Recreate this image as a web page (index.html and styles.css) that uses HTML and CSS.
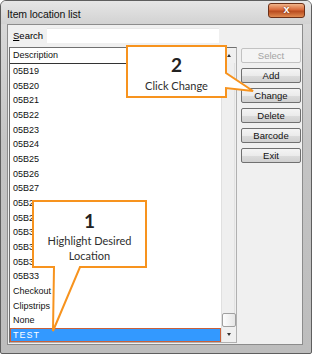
FILE: index.html
```html
<!DOCTYPE html>
<html lang="en">
<head>
  <meta charset="UTF-8" />
  <title>Item location list</title>
  <link rel="stylesheet" href="styles.css">
</head>
<body>
  <div class="window">
    <div class="titlebar">
      <span class="title">Item location list</span>
      <span class="close-btn">x</span>
    </div>
    <div class="client">
      <div class="search-row">
        <label><u>S</u>earch</label>
        <div class="search-box"></div>
      </div>
      <div class="main">
        <div class="listbox">
          <div class="list">
            <div class="list-head">Description</div>
            <div class="row">05B19</div>
            <div class="row">05B20</div>
            <div class="row">05B21</div>
            <div class="row">05B22</div>
            <div class="row">05B23</div>
            <div class="row">05B24</div>
            <div class="row">05B25</div>
            <div class="row">05B26</div>
            <div class="row">05B27</div>
            <div class="row">05B28</div>
            <div class="row">05B29</div>
            <div class="row">05B30</div>
            <div class="row">05B31</div>
            <div class="row">05B32</div>
            <div class="row">05B33</div>
            <div class="row">Checkout</div>
            <div class="row">Clipstrips</div>
            <div class="row">None</div>
            <div class="row selected">TEST</div>
          </div>
          <div class="scrollbar">
            <div class="arrow up"></div>
            <div class="track"></div>
            <div class="thumb"></div>
            <div class="arrow down"></div>
          </div>
        </div>
        <div class="buttons">
          <button class="disabled">Select</button>
          <button>Add</button>
          <button>Change</button>
          <button>Delete</button>
          <button>Barcode</button>
          <button>Exit</button>
        </div>
      </div>
    </div>
  </div>

  <!-- tutorial callouts drawn over the dialog -->
  <svg class="callouts" width="312" height="354" viewBox="0 0 312 354">
    <path d="M127,46 H226 V73 L253,91 L226,88 V97 H127 Z" />
    <path d="M33,201 H146 V267 H80 L53,331 L54,267 H33 Z" />
  </svg>
  <div class="callout callout-2">
    <div class="step">2</div>
    <div class="note">Click Change</div>
  </div>
  <div class="callout callout-1">
    <div class="step">1</div>
    <div class="note">Highlight Desired<br>Location</div>
  </div>
</body>
</html>
```

FILE: styles.css
```css
body {
  margin: 0;
  width: 312px;
  height: 354px;
  overflow: hidden;
  font-family: 'Liberation Sans', Arial, sans-serif;
  background: #fff;
  position: relative;
}
.window {
  box-sizing: border-box;
  width: 312px;
  height: 354px;
  border: 1px solid #5e5e5e;
  border-radius: 6px 6px 2px 2px;
  background: linear-gradient(#dcdcdc, #c4c4c4 40%, #bdbdbd);
  display: flex;
  flex-direction: column;
}
.titlebar {
  height: 23px;
  display: flex;
  align-items: flex-start;
  justify-content: space-between;
  padding: 0 6px 0 6px;
  background: linear-gradient(#e6e6e6, #d2d2d2);
  border-radius: 5px 5px 0 0;
}
.title {
  font-size: 10.5px;
  color: #111;
  margin-top: 7px;
  letter-spacing: -0.1px;
}
.close-btn {
  margin-top: 2px;
  width: 35px;
  height: 13px;
  border: 1px solid #6b3018;
  border-radius: 3px;
  background: linear-gradient(#f1b48a, #d8693a 45%, #b84b1f 55%, #e08a50);
  color: #fff;
  font-weight: bold;
  font-size: 11px;
  line-height: 11px;
  text-align: center;
  text-shadow: 0 0 2px #5a2000;
}
.client {
  flex: 1;
  margin: 0 8px 8px 6px;
  border: 1px solid #8c8c8c;
  background: #f0f0f0;
  display: flex;
  flex-direction: column;
}
.search-row {
  display: flex;
  align-items: center;
  height: 15px;
  margin-top: 3px;
  padding-left: 5px;
  font-size: 9.5px;
}
.search-row label {
  width: 34px;
}
.search-box {
  width: 172px;
  height: 15px;
  background: #fff;
  border-top: 1px solid #e8e8e8;
  box-sizing: border-box;
}
.main {
  display: flex;
  align-items: flex-start;
  margin-top: 4px;
  padding-left: 1px;
}
.listbox {
  width: 228px;
  height: 296px;
  box-sizing: border-box;
  border: 1px solid #707070;
  border-right-color: #b0b0b0;
  border-bottom-color: #b0b0b0;
  background: #fff;
  display: flex;
  overflow: hidden;
}
.list {
  flex: 1;
  font-size: 9px;
  color: #111;
}
.list-head {
  height: 15px;
  line-height: 15px;
  border-bottom: 1px solid #333;
  padding-left: 3px;
}
.row {
  height: 14.67px;
  line-height: 14.67px;
  padding-left: 3px;
}
.row.selected {
  background: #3399ff;
  color: #fff;
  letter-spacing: 1px;
  box-shadow: inset 0 0 0 1px #c8603a;
}
.scrollbar {
  width: 14px;
  display: flex;
  flex-direction: column;
  background: #f0f0f0;
  border-left: 1px solid #e0e0e0;
}
.arrow {
  height: 15px;
  position: relative;
}
.arrow::after {
  content: "";
  position: absolute;
  left: 5px;
  top: 6px;
  border-left: 2.5px solid transparent;
  border-right: 2.5px solid transparent;
}
.arrow.up::after {
  border-bottom: 3px solid #333;
}
.arrow.down::after {
  border-top: 3px solid #333;
}
.track {
  flex: 1;
  background: repeating-linear-gradient(90deg, #efefef 0 12px, #e2e2e2 12px 13px);
}
.thumb {
  height: 12px;
  margin: 0 0 0 0;
  border: 1px solid #a0a0a0;
  border-radius: 2px;
  background: linear-gradient(90deg, #fdfdfd, #e6e6e6);
}
.buttons {
  display: flex;
  flex-direction: column;
  gap: 5px;
  margin-left: 4px;
  margin-top: 1px;
}
button {
  width: 60px;
  height: 15px;
  padding: 0;
  font-family: 'Liberation Sans', Arial, sans-serif;
  font-size: 9.5px;
  color: #111;
  border: 1px solid #707070;
  border-radius: 2px;
  background: linear-gradient(#f4f4f4, #ebebeb 50%, #dcdcdc 51%, #d0d0d0);
}
button.disabled {
  color: #a3a3a3;
  border-color: #c2c2c2;
  background: #f4f4f4;
}
.callouts {
  position: absolute;
  left: 0;
  top: 0;
}
.callouts path {
  fill: #fff;
  stroke: #f7931e;
  stroke-width: 2;
  stroke-linejoin: miter;
}
.callout {
  position: absolute;
  text-align: center;
  font-family: Lato, 'Open Sans', sans-serif;
  color: #2e2e2e;
}
.callout .step {
  font-weight: bold;
  font-size: 19px;
  line-height: 20px;
  color: #222;
}
.callout .note {
  font-size: 11px;
  line-height: 15px;
}
.callout-2 {
  left: 127px;
  top: 55px;
  width: 99px;
}
.callout-2 .note {
  margin-top: 3px;
}
.callout-1 {
  left: 33px;
  top: 211px;
  width: 113px;
}
.callout-1 .note {
  margin-top: 2px;
}
```
